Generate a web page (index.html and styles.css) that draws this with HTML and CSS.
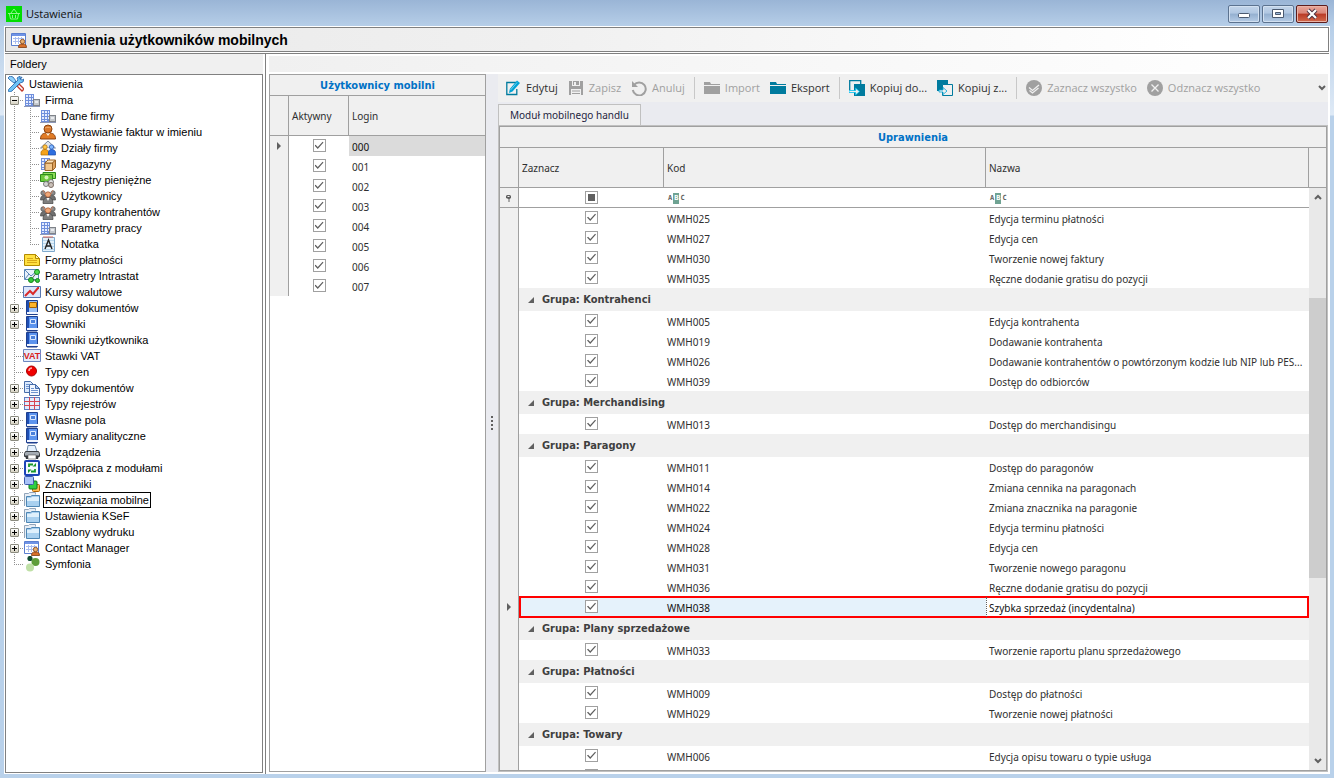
FILE: index.html
```html
<!DOCTYPE html>
<html lang="pl">
<head>
    <meta charset="UTF-8">
    <title>Ustawienia</title>
    <meta name="viewport" content="width=device-width, initial-scale=1">
    <link rel="stylesheet" href="styles.css">
</head>
<body>
<!-- ikony -->
<svg class="sprite" width="0" height="0" aria-hidden="true">
    <symbol id="i-tools" viewBox="0 0 16 16">
        <path d="M2 1l12 12" stroke="#5a9fe0" stroke-width="1"/>
        <path d="M14 1L9 6" stroke="#3b76b8" stroke-width="1.500"/>
        <path d="M9 10l5 5 2-2-5-5z" fill="#fff" stroke="#c0392b" stroke-width="1.300"/>
        <path d="M1 13l9-9-1-2 3-2v3l2 1 2-1-1 3-3 1-8 8-2 1-2-1z" fill="#6fc3f7" stroke="#1f5fa8" stroke-width=".8"/>
        <path d="M0 2l2-2 3 1 3 4-2 2-4-3z" fill="#8fd0fa" stroke="#1f5fa8" stroke-width=".8"/>
    </symbol>
    <symbol id="i-building" viewBox="0 0 16 16">
        <g shape-rendering="crispEdges">
            <path d="M1 2h9v12H1z" fill="#6f8fdc"/>
            <path d="M2 3h2v2H2zM5 3h2v2H5zM8 3h1v2H8zM2 6h2v2H2zM5 6h2v2H5zM8 6h1v2H8zM2 9h2v2H2zM5 9h2v2H5zM8 9h1v2H8zM2 12h2v1H2zM5 12h2v1H5z" fill="#e6edff"/>
            <path d="M9 7h7v7H9z" fill="#7f8389"/>
            <path d="M10 8h5v5h-5z" fill="#c5c9ce"/>
            <path d="M11 9h3v2h-3z" fill="#e9ebee"/>
            <path d="M0 14h16v1H0z" fill="#8d98b8"/>
        </g>
    </symbol>
    <symbol id="i-person" viewBox="0 0 16 16">
        <path d="M0.500 15c0-4 2-5.500 5-6h5c3 .5 5 2 5 6z" fill="#e07b26" stroke="#8c4310"/>
        <path d="M6 9l2 3 2-3z" fill="#fff3e0"/>
        <circle cx="8" cy="5" r="4" fill="#d9772b" stroke="#8c4310"/>
        <path d="M5 4c2-1 4-1 6 0" stroke="#f2b070" fill="none"/>
    </symbol>
    <symbol id="i-dept" viewBox="0 0 16 16">
        <path d="M0.500 8L8 1l7.500 7z" fill="#dfe6ef" stroke="#7b8aa0"/>
        <path d="M2 8h12v6H2z" fill="#eef2f8"/>
        <circle cx="5" cy="7" r="2.200" fill="#ffc74a" stroke="#b06a00" stroke-width=".7"/>
        <path d="M1 15v-3c1-2 2-2.500 4-2.500s3 .5 3.500 2.500v3z" fill="#f5a31b" stroke="#b06a00" stroke-width=".7"/>
        <circle cx="11.500" cy="7" r="2.200" fill="#7fb7ff" stroke="#1c4fae" stroke-width=".7"/>
        <path d="M8.500 15v-3c.5-2 1.500-2.500 3-2.500s3.500.5 4 2.500v3z" fill="#2f6fe0" stroke="#1c4fae" stroke-width=".7"/>
    </symbol>
    <symbol id="i-box" viewBox="0 0 16 16">
        <path d="M1 2h9v12H1z" fill="#6f8fdc"/>
        <path d="M2 3h2v2H2zM5 3h2v2H5zM2 6h2v2H2zM2 9h2v2H2zM2 12h2v1H2zM8 3h1v2H8z" fill="#e6edff"/>
        <path d="M5 7h7.500v7.500H5z" fill="#f2c68c" stroke="#9a6325"/>
        <path d="M5 7l3-3h7.500l-3 3z" fill="#fbe3bd" stroke="#9a6325"/>
        <path d="M12.500 7l3-3v7.500l-3 3z" fill="#dda15d" stroke="#9a6325"/>
    </symbol>
    <symbol id="i-money" viewBox="0 0 16 16">
        <path d="M3 0.500h12.500v6H3z" fill="#8fdc5a" stroke="#2e8b1c"/>
        <path d="M0.500 2.500h12v7H0.500z" fill="#6cc93c" stroke="#2e8b1c"/>
        <circle cx="6.500" cy="5.500" r="2" fill="#d6f5b8"/>
        <circle cx="6" cy="12" r="2.500" fill="#d5d5d5" stroke="#7d7d7d"/>
        <circle cx="11" cy="10" r="2.500" fill="#e2e2e2" stroke="#7d7d7d"/>
        <circle cx="11" cy="13" r="2.500" fill="#c9c0b8" stroke="#7d6d64"/>
    </symbol>
    <symbol id="i-people" viewBox="0 0 16 16">
        <circle cx="3" cy="5" r="2.200" fill="#8c8c8c" stroke="#4f4f4f" stroke-width=".7"/>
        <circle cx="13" cy="5" r="2.200" fill="#8c8c8c" stroke="#4f4f4f" stroke-width=".7"/>
        <path d="M0.500 12c0-3 1-4.500 3-4.500h9c2 0 3 1.500 3 4.500z" fill="#6f6f6f" stroke="#4a4a4a" stroke-width=".7"/>
        <path d="M3 2l2 4M13 2l-2 4" stroke="#c8866a"/>
        <path d="M3 15.500c0-4 1.500-6 5-6s5 2 5 6z" fill="#7e7e7e" stroke="#444" stroke-width=".7"/>
        <circle cx="8" cy="6.500" r="2.700" fill="#f0a878" stroke="#a3522c" stroke-width=".7"/>
        <path d="M6.500 10l1.500 3 1.500-3z" fill="#fff"/>
    </symbol>
    <symbol id="i-note" viewBox="0 0 16 16">
        <path d="M2.500 1.500h12v14h-12z" fill="#e3f1fb" stroke="#7fa9cc"/>
        <path d="M3 4h11v1H3zM3 7h11v1H3zM3 10h11v1H3zM3 13h11v1H3z" fill="#b9d7ee"/>
        <path d="M4 0v2M6 0v2M8 0v2M10 0v2M12 0v2" stroke="#e06a5a"/>
        <path d="M5 13l3.500-9L12 13M6.500 10h4" fill="none" stroke="#222" stroke-width="1.400"/>
    </symbol>
    <symbol id="i-card" viewBox="0 0 16 16">
        <path d="M0.500 2.500h11l4 4v7h-15z" fill="#ffe040" stroke="#b38a00"/>
        <path d="M11.500 2.500v4h4z" fill="#fff3a8" stroke="#b38a00"/>
        <path d="M3 6.500h6M3 8.500h10M3 10.500h10" stroke="#d9a818"/>
    </symbol>
    <symbol id="i-intrastat" viewBox="0 0 16 16">
        <path d="M0.500 1.500h14v10H0.500z" fill="#e9f1fb" stroke="#5a86b8"/>
        <path d="M1 2l6 6 7-6M1 11l4-5" fill="none" stroke="#5a86b8"/>
        <path d="M7 12l6-8M7 11l6 2" stroke="#4d6b4d"/>
        <circle cx="13" cy="4" r="2.500" fill="#4fdc4f" stroke="#15851c"/>
        <circle cx="7" cy="12" r="2.500" fill="#35c93a" stroke="#15851c"/>
        <circle cx="13.500" cy="12.500" r="2" fill="#35c93a" stroke="#15851c"/>
    </symbol>
    <symbol id="i-chart" viewBox="0 0 18 16">
        <path d="M0.500 2.500h17v11H0.500z" fill="#dbe6fb" stroke="#5876b0"/>
        <path d="M2 12l5-5 3 3 5-6 1 0" fill="none" stroke="#d92a2a" stroke-width="2"/>
    </symbol>
    <symbol id="i-book" viewBox="0 0 16 16">
        <path d="M2.500 0.500h11v14h-11z" fill="#5b93ee" stroke="#1e3f8e"/>
        <path d="M3 12h11v2H3z" fill="#f4f7ff"/>
        <path d="M3 1h2v11H3z" fill="#1f4fb4"/>
        <path d="M6.500 3.500h5v4h-5z" fill="#4a80da" stroke="#dce9ff"/>
        <path d="M3 15h10" stroke="#1e3f8e"/>
    </symbol>
    <symbol id="i-book-o" viewBox="0 0 16 16">
        <path d="M2.500 0.500h11v14h-11z" fill="#9cc0f4" stroke="#1e3f8e"/>
        <path d="M3 1h2v11H3z" fill="#1f4fb4"/>
        <path d="M5.500 2.500h7v5h-7z" fill="#ffb52b" stroke="#a86400"/>
        <path d="M3 12h11v2H3z" fill="#f4f7ff"/>
    </symbol>
    <symbol id="i-vat" viewBox="0 0 18 16">
        <path d="M0.500 1.500h17v12H0.500z" fill="#e4ecfb" stroke="#6c87c0"/>
        <text x="9" y="11" text-anchor="middle" font-family="Liberation Sans, sans-serif" font-size="9" font-weight="700" fill="#d81e1e">VAT</text>
    </symbol>
    <symbol id="i-red" viewBox="0 0 16 16">
        <circle cx="7.500" cy="7" r="5" fill="#f00000" stroke="#a00"/>
        <path d="M5 7a3 3 0 0 1 3-3" fill="none" stroke="#ffb0b0" stroke-width="1.500"/>
    </symbol>
    <symbol id="i-docs" viewBox="0 0 16 16">
        <path d="M0.500 1.500h6l3 3v8h-9z" fill="#dceafd" stroke="#476ca8"/>
        <path d="M5.500 4.500h6l4 4v7h-10z" fill="#f2f7ff" stroke="#476ca8"/>
        <path d="M11.500 4.500v4h4z" fill="#a9c6ef" stroke="#476ca8"/>
        <path d="M7 8.500h3M7 10.500h7M7 12.500h7M2 4.500h3M2 6.500h3M2 8.500h3" stroke="#6d93cf"/>
    </symbol>
    <symbol id="i-table" viewBox="0 0 16 16">
        <g shape-rendering="crispEdges">
            <path d="M0 1h16v13H0z" fill="#5f7cc0"/>
            <path d="M1 2h14v11H1z" fill="#e4ebfc"/>
            <path d="M5 1h1v13H5zM10 1h1v13h-1zM0 5h16v1H0zM0 9h16v1H0z" fill="#d64553"/>
        </g>
    </symbol>
    <symbol id="i-printer" viewBox="0 0 16 16">
        <path d="M4 1.500h7l2 6H3z" fill="#e6f2ff" stroke="#6b86a8"/>
        <path d="M1.500 7.500h13l1 2v3H0.500v-3z" fill="#a5acb4" stroke="#3b3f44"/>
        <path d="M1 11.500h14l-1 3.500H2z" fill="#33363b"/>
        <path d="M4 11h8v4H4z" fill="#fff" stroke="#555" stroke-width=".6"/>
    </symbol>
    <symbol id="i-sync" viewBox="0 0 16 16">
        <rect x="1" y="1" width="14" height="14" rx="1" fill="#f3f8ff" stroke="#1c44b8" stroke-width="2"/>
        <path d="M5 7V4.500h4M11 9v2.500H7" fill="none" stroke="#17962a" stroke-width="1.800"/>
        <path d="M8.500 6.500h3.500V3zM7.500 9.500H4V13z" fill="#17962a"/>
    </symbol>
    <symbol id="i-tags" viewBox="0 0 16 16">
        <rect x="8.500" y="8.500" width="7" height="7" rx="1" fill="#ffbb55" stroke="#b06000"/>
        <rect x="5" y="5" width="8" height="8" rx="1" fill="#2fd043" stroke="#0f7a1c"/>
        <rect x=".5" y=".5" width="9" height="8" rx="1" fill="#a9c2f7" stroke="#3c5cab"/>
    </symbol>
    <symbol id="i-folder" viewBox="0 0 16 16">
        <path d="M0.500 14V1.500h4l1-1h6v2" fill="#e8eef5" stroke="#93a5ba"/>
        <path d="M2.500 14.500v-10h4l1.500-1h7.500v11z" fill="#a9d0ef" stroke="#4f87b5"/>
        <path d="M3 9h12V5H8L7 6H3z" fill="#dff0fc"/>
    </symbol>
    <symbol id="i-contact" viewBox="0 0 16 16">
        <path d="M0.500 1.500h14v12H0.500z" fill="#fff" stroke="#5b7fd0"/>
        <path d="M1 2h13v2H1z" fill="#6f93e6"/>
        <path d="M2 6.500h11M2 9.500h11M4.500 5v7M7.500 5v7M10.500 5v7" stroke="#a9bdf0"/>
        <path d="M7.500 15.500c0-2.500 1-3.500 3.500-3.500h1c2.500 0 3.500 1 3.500 3.500z" fill="#d9702a" stroke="#7c3b10" stroke-width=".8"/>
        <circle cx="11.500" cy="9.500" r="2.200" fill="#e8b070" stroke="#7c3b10" stroke-width=".8"/>
    </symbol>
    <symbol id="i-symfonia" viewBox="0 0 16 16">
        <circle cx="6" cy="2.500" r="2.600" fill="#0e4a30"/>
        <circle cx="11.500" cy="6" r="4" fill="#5f9e3a"/>
        <circle cx="6" cy="11.500" r="4" fill="#bfe0a6"/>
    </symbol>
    <symbol id="t-edit" viewBox="0 0 16 16">
        <path d="M11 2.500H1.800v12h10V9" fill="none" stroke="#007b9e" stroke-width="1.300"/>
        <path d="M12 0.500l3 2.500-7.500 8.500L4 13l.8-4z" fill="#00a3d6"/>
        <path d="M12 2.500L5.500 10" stroke="#bfeaf8" stroke-width=".6"/>
    </symbol>
    <symbol id="t-save" viewBox="0 0 16 16">
        <path d="M1 1h14v14H1z" fill="#a0a0a0"/>
        <path d="M4 1h8v5H4zM3 9h10v6H3z" fill="#f0f0f0"/>
        <path d="M5 1h6v4H5z" fill="#a0a0a0"/>
        <path d="M6 2h2v3H6z" fill="#f0f0f0"/>
        <path d="M4 10.500h8v1H4zM4 13h8v1H4z" fill="#a0a0a0"/>
    </symbol>
    <symbol id="t-undo" viewBox="0 0 16 16">
        <path d="M3 5a6.500 6.500 0 1 1-1.200 5" fill="none" stroke="#a0a0a0" stroke-width="2"/>
        <path d="M1 1v6h6z" fill="#a0a0a0"/>
    </symbol>
    <symbol id="t-folder" viewBox="0 0 16 16">
        <path d="M0 2h6l1 2h9v1H0z"/>
        <path d="M0 6h16v8H0z"/>
    </symbol>
    <symbol id="t-copyto" viewBox="0 0 16 16">
        <path d="M.7 10V.7h11V4" fill="none" stroke="#007b9e" stroke-width="1.300"/>
        <path d="M5 4h11v12H5z" fill="#007b9e"/>
        <path d="M0 10.500h6.500V8l4 3.500-4 3.500v-2.500H0z" fill="#f0f0f0" stroke="#00c0f0" stroke-width=".8"/>
    </symbol>
    <symbol id="t-copyfrom" viewBox="0 0 16 16">
        <path d="M0 0h11v11H0z" fill="#007b9e"/>
        <path d="M5.500 4.500h10v11h-10z" fill="#f0f0f0" stroke="#007b9e"/>
        <path d="M2 10h4V7.500l4 3.500-4 3.500V12H2z" fill="#f0f0f0" stroke="#00a3d6" stroke-width=".8"/>
    </symbol>
    <symbol id="t-checkall" viewBox="0 0 16 16">
        <circle cx="8" cy="8" r="8" fill="#a0a0a0"/>
        <path d="M3 7.500l3.500 3L13 5M3.500 10.500l3 2.500 6-5" fill="none" stroke="#f0f0f0" stroke-width="1.300"/>
    </symbol>
    <symbol id="t-uncheck" viewBox="0 0 16 16">
        <circle cx="8" cy="8" r="8" fill="#a0a0a0"/>
        <path d="M4.500 4.500l7 7M11.500 4.500l-7 7" stroke="#f0f0f0" stroke-width="1.300"/>
    </symbol>
    <symbol id="t-filter" viewBox="0 0 8 8">
        <path d="M2 1h3l1 1v2L4.500 5v3h-1V5L1 4V2z" fill="#606060"/>
        <path d="M2.500 2.500h2" stroke="#f0f0f0"/>
    </symbol>
    <symbol id="t-chevron" viewBox="0 0 8 6">
        <path d="M1 1l3 3 3-3" fill="none" stroke="#606060" stroke-width="2"/>
    </symbol>
</svg>

<div class="window">
    <header class="titlebar">
        <svg class="app-icon" viewBox="0 0 16 16"><path d="M0 0h16v16H0z" fill="#00dc00"/><path d="M5 7l3-4 3 4M2 7.500h12M3.500 8l1 5h7l1-5M6.500 9v3M9.500 9v3" fill="none" stroke="#8df58d"/></svg>
        <span class="titlebar-text">Ustawienia</span>
        <div class="window-buttons">
            <button type="button" aria-label="Minimalizuj"><svg viewBox="0 0 16 12"><rect x="2.500" y="5.500" width="11" height="4" rx="1" fill="#fff" stroke="#4b5a70"/></svg></button>
            <button type="button" aria-label="Maksymalizuj"><svg viewBox="0 0 16 12"><path d="M2.500 1.500h11v8h-11z" fill="#fff" stroke="#4b5a70"/><path d="M5.500 4.500h5v2h-5z" fill="#9cb8da" stroke="#4b5a70"/></svg></button>
            <button type="button" class="close" aria-label="Zamknij"><svg viewBox="0 0 16 12"><path d="M4 2l8 8M12 2l-8 8" stroke="#4a3040" stroke-width="4"/><path d="M4 2l8 8M12 2l-8 8" stroke="#fff" stroke-width="2.200"/></svg></button>
        </div>
    </header>

    <div class="content">
        <div class="page-header">
            <svg class="icon"><use href="#i-contact"/></svg>
            <h1>Uprawnienia użytkowników mobilnych</h1>
        </div>

        <div class="panes">
            <nav class="folders">
                <h2>Foldery</h2>
                <div class="tree" id="tree"></div>
            </nav>

            <main class="workspace">
                <div class="workspace-top"></div>
                <div class="workspace-body">
                    <section class="grid users">
                        <h3 class="band">Użytkownicy mobilni</h3>
                        <table>
                            <thead>
                                <tr><th class="ind"></th><th class="col-active">Aktywny</th><th class="col-last">Login</th></tr>
                            </thead>
                            <tbody id="users"></tbody>
                        </table>
                    </section>

                    <div class="splitter"><i></i><i></i><i></i><i></i></div>

                    <section class="permissions">
                        <div class="toolbar">
                            <button type="button"><svg class="icon"><use href="#t-edit"/></svg>Edytuj</button>
                            <button type="button" disabled><svg class="icon"><use href="#t-save"/></svg>Zapisz</button>
                            <button type="button" disabled><svg class="icon"><use href="#t-undo"/></svg>Anuluj</button>
                            <span class="sep"></span>
                            <button type="button" disabled><svg class="icon gray"><use href="#t-folder"/></svg>Import</button>
                            <button type="button"><svg class="icon teal"><use href="#t-folder"/></svg>Eksport</button>
                            <span class="sep"></span>
                            <button type="button"><svg class="icon"><use href="#t-copyto"/></svg>Kopiuj do...</button>
                            <button type="button"><svg class="icon"><use href="#t-copyfrom"/></svg>Kopiuj z...</button>
                            <span class="sep"></span>
                            <button type="button" disabled><svg class="icon"><use href="#t-checkall"/></svg>Zaznacz wszystko</button>
                            <button type="button" disabled><svg class="icon"><use href="#t-uncheck"/></svg>Odznacz wszystko</button>
                            <button type="button" class="more" aria-label="Więcej"><svg class="chevron"><use href="#t-chevron"/></svg></button>
                        </div>
                        <div class="tabs"><button type="button" class="tab">Moduł mobilnego handlu</button></div>
                        <div class="tab-page">
                            <div class="grid">
                                <h3 class="band">Uprawnienia</h3>
                                <div class="grid-body">
                                    <div class="grid-rows">
                                        <table>
                                            <thead>
                                                <tr><th class="ind"></th><th class="col-check">Zaznacz</th><th class="col-code">Kod</th><th>Nazwa</th></tr>
                                            </thead>
                                            <tbody id="permissions"></tbody>
                                        </table>
                                    </div>
                                    <div class="grid-side">
                                        <div class="side-head"></div>
                                        <div class="scrollbar">
                                            <svg class="chevron up"><use href="#t-chevron"/></svg>
                                            <div class="before"></div>
                                            <div class="thumb"></div>
                                            <div class="after"></div>
                                            <svg class="chevron"><use href="#t-chevron"/></svg>
                                        </div>
                                    </div>
                                </div>
                            </div>
                        </div>
                    </section>
                </div>
            </main>
        </div>
    </div>
</div>

<script>
// drzewo: [ikona, nazwa, rozwijane, dzieci]
const tree = [
    ['building', 'Firma', '-', [
        ['building', 'Dane firmy'],
        ['person', 'Wystawianie faktur w imieniu'],
        ['dept', 'Działy firmy'],
        ['box', 'Magazyny'],
        ['money', 'Rejestry pieniężne'],
        ['people', 'Użytkownicy'],
        ['people', 'Grupy kontrahentów'],
        ['building', 'Parametry pracy'],
        ['note', 'Notatka']
    ]],
    ['card', 'Formy płatności'],
    ['intrastat', 'Parametry Intrastat'],
    ['chart', 'Kursy walutowe'],
    ['book-o', 'Opisy dokumentów', '+'],
    ['book', 'Słowniki', '+'],
    ['book', 'Słowniki użytkownika'],
    ['vat', 'Stawki VAT'],
    ['red', 'Typy cen'],
    ['docs', 'Typy dokumentów', '+'],
    ['table', 'Typy rejestrów', '+'],
    ['book', 'Własne pola', '+'],
    ['book', 'Wymiary analityczne', '+'],
    ['printer', 'Urządzenia', '+'],
    ['sync', 'Współpraca z modułami', '+'],
    ['tags', 'Znaczniki', '+'],
    ['folder', 'Rozwiązania mobilne', '+'],
    ['folder', 'Ustawienia KSeF', '+'],
    ['folder', 'Szablony wydruku', '+'],
    ['contact', 'Contact Manager', '+'],
    ['symfonia', 'Symfonia']
];
const selected = 'Rozwiązania mobilne';

const permissions = [
    [null, [
        ['WMH025', 'Edycja terminu płatności'],
        ['WMH027', 'Edycja cen'],
        ['WMH030', 'Tworzenie nowej faktury'],
        ['WMH035', 'Ręczne dodanie gratisu do pozycji']
    ]],
    ['Kontrahenci', [
        ['WMH005', 'Edycja kontrahenta'],
        ['WMH019', 'Dodawanie kontrahenta'],
        ['WMH026', 'Dodawanie kontrahentów o powtórzonym kodzie lub NIP lub PES...'],
        ['WMH039', 'Dostęp do odbiorców']
    ]],
    ['Merchandising', [
        ['WMH013', 'Dostęp do merchandisingu']
    ]],
    ['Paragony', [
        ['WMH011', 'Dostęp do paragonów'],
        ['WMH014', 'Zmiana cennika na paragonach'],
        ['WMH022', 'Zmiana znacznika na paragonie'],
        ['WMH024', 'Edycja terminu płatności'],
        ['WMH028', 'Edycja cen'],
        ['WMH031', 'Tworzenie nowego paragonu'],
        ['WMH036', 'Ręczne dodanie gratisu do pozycji'],
        ['WMH038', 'Szybka sprzedaż (incydentalna)']
    ]],
    ['Plany sprzedażowe', [
        ['WMH033', 'Tworzenie raportu planu sprzedażowego']
    ]],
    ['Płatności', [
        ['WMH009', 'Dostęp do płatności'],
        ['WMH029', 'Tworzenie nowej płatności']
    ]],
    ['Towary', [
        ['WMH006', 'Edycja opisu towaru o typie usługa'],
        ['', '']
    ]]
];

function node(icon, name, toggle) {
    const btn = toggle ? `<button type="button" class="toggle${toggle === '+' ? ' plus' : ''}" aria-label="${name}"></button>` : '';
    const wide = icon === 'chart' || icon === 'vat' ? ' wide' : '';
    return `<div class="node"><span class="slot">${btn}</span><svg class="icon${wide}"><use href="#i-${icon}"/></svg>` +
        `<a href="#" class="label${name === selected ? ' selected' : ''}">${name}</a></div>`;
}

function list(items) {
    return '<ul>' + items.map(([icon, name, toggle, children]) =>
        `<li>${node(icon, name, toggle)}${children ? list(children) : ''}</li>`).join('') + '</ul>';
}

document.getElementById('tree').innerHTML =
    '<div class="node root"><svg class="icon"><use href="#i-tools"/></svg><a href="#" class="label">Ustawienia</a></div>' + list(tree);

document.getElementById('users').innerHTML = ['000', '001', '002', '003', '004', '005', '006', '007'].map((login, i) =>
    `<tr${i === 0 ? ' class="current"' : ''}><td class="ind">${i === 0 ? '<i class="arrow"></i>' : ''}</td>` +
    `<td class="check"><input type="checkbox" checked aria-label="Aktywny ${login}"></td><td>${login}</td></tr>`).join('');

const abc = '<span class="abc">A<b>B</b>C</span>';
let rows = '<tr class="filter"><td class="ind"><svg class="pin"><use href="#t-filter"/></svg></td>' +
    `<td class="check"><input type="checkbox" class="mixed" aria-label="Zaznacz"></td><td>${abc}</td><td>${abc}</td></tr>`;
permissions.forEach(([group, items]) => {
    if (group) {
        rows += `<tr class="group"><td class="ind"></td><td colspan="3"><i class="open"></i>Grupa: ${group}</td></tr>`;
    }
    items.forEach(([code, name]) => {
        const focused = code === 'WMH038';
        rows += `<tr${focused ? ' class="focused"' : ''}><td class="ind">${focused ? '<i class="arrow"></i>' : ''}</td>` +
            `<td class="check"><input type="checkbox" checked aria-label="${code}"></td><td>${code}</td><td>${name}</td></tr>`;
    });
});
document.getElementById('permissions').innerHTML = rows;
</script>
</body>
</html>
```
FILE: styles.css
```css
* {
    box-sizing: border-box;
}

body {
    margin: 0;
    height: 100vh;
    overflow: hidden;
    font-family: "Noto Sans", "DejaVu Sans Condensed", sans-serif;
    font-size: 10px;
    color: #2f2f2f;
}

h1, h2, h3, ul {
    margin: 0;
    padding: 0;
}

button {
    font: inherit;
    color: inherit;
    background: none;
    border: none;
    padding: 0;
}

.sprite {
    position: absolute;
}

.icon {
    width: 16px;
    height: 16px;
    flex: none;
}

/* okno */
.window {
    height: 100%;
    display: flex;
    flex-direction: column;
    padding: 0 4px 4px;
    background: linear-gradient(#9ab5d6 0, #b6cee8 26px, #dfeaf6 115px, #b9d1ea 116px);
}

.titlebar {
    height: 26px;
    flex: none;
    display: flex;
    align-items: center;
    gap: 4px;
    padding: 2px 2px 0;
}

.app-icon {
    width: 16px;
    height: 16px;
}

.titlebar-text {
    flex: 1;
    font: 11px/16px "Open Sans", sans-serif;
    color: #111;
}

.window-buttons {
    display: flex;
    gap: 2px;
}

.window-buttons button {
    width: 32px;
    height: 18px;
    border: 1px solid #5c7390;
    border-radius: 2px;
    background: linear-gradient(#c3d5ea 0, #b0c7e2 45%, #94b0d0 50%, #b5cce6 100%);
    box-shadow: inset 0 0 0 1px #d3e1f1;
    display: flex;
    align-items: center;
    justify-content: center;
}

.window-buttons svg {
    width: 16px;
    height: 12px;
}

.window-buttons .close {
    border-color: #5d1c1c;
    background: linear-gradient(#e9a79b 0, #d98578 45%, #b93a26 50%, #d26a4c 100%);
    box-shadow: inset 0 0 0 1px #eab3a6;
}

.content {
    flex: 1;
    min-height: 0;
    display: flex;
    flex-direction: column;
    background: #fff;
    padding: 1px 1px 0;
}

.page-header {
    height: 25px;
    flex: none;
    display: flex;
    align-items: center;
    gap: 5px;
    padding: 0 5px;
    border: 1px solid #808080;
    background: linear-gradient(to right, #e9e9e9 0, #f0f0f0 40%, #fff 90%);
}

.page-header h1 {
    font: bold 14px/20px "Liberation Sans", Arial, sans-serif;
    color: #000;
}

.panes {
    flex: 1;
    min-height: 0;
    display: flex;
    margin-top: 1px;
    border-top: 1px solid #808080;
}

/* lewy panel */
.folders {
    width: 261px;
    flex: none;
    display: flex;
    flex-direction: column;
    padding: 0 2px 1px 0;
    border-right: 1px solid #808080;
    font-family: "Liberation Sans", Arial, sans-serif;
    font-size: 11px;
    color: #000;
}

.folders h2 {
    height: 20px;
    font-size: 11px;
    font-weight: normal;
    line-height: 20px;
    padding-left: 5px;
    background: #f0f0f0;
}

.tree {
    flex: 1;
    min-height: 0;
    overflow: hidden;
    border: 1px solid #808080;
    padding: 1px 2px;
}

.tree ul {
    list-style: none;
}

.tree li {
    background: repeating-linear-gradient(#909090 0 1px, transparent 1px 2px) 6px 0 / 1px 100% no-repeat;
}

.tree li:last-child {
    background-size: 1px 9px;
}

.tree li ul {
    padding-left: 16px;
}

.node {
    height: 16px;
    display: flex;
    align-items: center;
}

.slot {
    width: 16px;
    height: 16px;
    flex: none;
    display: flex;
    align-items: center;
    padding-left: 2px;
    background: repeating-linear-gradient(to right, #909090 0 1px, transparent 1px 2px) 6px 8px / 10px 1px no-repeat;
}

.toggle {
    width: 9px;
    height: 9px;
    border: 1px solid #8c8c80;
    border-radius: 1px;
    background:
        linear-gradient(#000, #000) center / 5px 1px no-repeat,
        linear-gradient(#fff, #d6d2c2);
}

.toggle.plus {
    background:
        linear-gradient(#000, #000) center / 5px 1px no-repeat,
        linear-gradient(#000, #000) center / 1px 5px no-repeat,
        linear-gradient(#fff, #d6d2c2);
}

.tree .wide {
    width: 18px;
    margin: 0 -1px;
}

.label {
    margin-left: 3px;
    padding: 0 1px;
    border: 1px solid transparent;
    line-height: 14px;
    color: #000;
    text-decoration: none;
    white-space: nowrap;
}

.label.selected {
    border-color: #000;
}

/* prawa strona */
.workspace {
    flex: 1;
    min-width: 0;
    display: flex;
    flex-direction: column;
    padding: 2px 1px 2px 3px;
}

.workspace-top {
    height: 16px;
    flex: none;
    margin-bottom: 2px;
    background: linear-gradient(to right, #f0f0f0, #fff);
}

.workspace-body {
    flex: 1;
    min-height: 0;
    display: flex;
    background: #eaebf0;
}

.grid {
    display: flex;
    flex-direction: column;
    border: 1px solid #a0a0a0;
    background: #fff;
    overflow: hidden;
}

.users {
    width: 217px;
    flex: none;
}

.band {
    height: 21px;
    flex: none;
    border-bottom: 1px solid #a0a0a0;
    background: #f0f0f0;
    font: bold 11px/21px "DejaVu Sans Condensed", "DejaVu Sans", sans-serif;
    text-align: center;
    color: #0072c6;
}

table {
    width: 100%;
    table-layout: fixed;
    border-collapse: separate;
    border-spacing: 0;
}

th {
    height: 40px;
    padding: 0 3px;
    border-right: 1px solid #a0a0a0;
    border-bottom: 1px solid #a0a0a0;
    background: #f0f0f0;
    font-weight: normal;
    text-align: left;
}

th.col-last {
    border-right: none;
}

td {
    height: 20px;
    padding: 1px 3px 0;
    line-height: 18px;
    white-space: nowrap;
    overflow: hidden;
}

.ind {
    width: 19px;
    padding: 0;
    border-right: 1px solid #a0a0a0;
    background: #f0f0f0;
    text-align: center;
}

.col-active {
    width: 60px;
}

.col-check {
    width: 145px;
}

.col-code {
    width: 322px;
}

.arrow {
    display: inline-block;
    border: 4px solid transparent;
    border-left-color: #606060;
    border-right: none;
}

.current td:last-child {
    background: #dbdbdb;
    color: #111;
}

td.check {
    padding: 0 0 1px;
    line-height: 0;
    text-align: center;
}

input[type="checkbox"] {
    appearance: none;
    display: inline-block;
    vertical-align: top;
    width: 13px;
    height: 13px;
    margin: 0;
    padding: 1px;
    border: 1px solid #a0a0a0;
    background: #fff;
}

input[type="checkbox"]::before {
    content: "";
    display: block;
    width: 9px;
    height: 9px;
}

input[type="checkbox"]:checked::before {
    background: #606060;
    clip-path: polygon(0 50%, 12% 42%, 36% 66%, 90% 8%, 100% 18%, 36% 90%);
}

input.mixed::before {
    width: 7px;
    height: 7px;
    margin: 1px;
    background: #606060;
}

.splitter {
    width: 12px;
    flex: none;
    display: flex;
    flex-direction: column;
    align-items: center;
    justify-content: center;
    gap: 2px;
}

.splitter i {
    width: 2px;
    height: 2px;
    background: #606060;
}

.permissions {
    flex: 1;
    min-width: 0;
    display: flex;
    flex-direction: column;
}

/* pasek narzędzi */
.toolbar {
    height: 28px;
    flex: none;
    display: flex;
    align-items: center;
    padding-left: 2px;
    background: #f0f0f0;
    font: 11px/16px "Open Sans", sans-serif;
}

.toolbar button {
    display: flex;
    align-items: center;
    gap: 5px;
    padding: 0 5px;
    white-space: nowrap;
}

.toolbar button:disabled {
    color: #a0a0a0;
}

.toolbar .sep {
    width: 1px;
    height: 22px;
    margin: 0 4px;
    background: #c8c8c8;
}

.gray {
    fill: #a0a0a0;
}

.teal {
    fill: #007b9e;
}

.toolbar .more {
    margin-left: auto;
    padding: 0 2px;
}

.chevron {
    width: 8px;
    height: 6px;
    flex: none;
}

.chevron.up {
    transform: rotate(180deg);
}

.tabs {
    height: 23px;
    flex: none;
    padding-top: 2px;
}

.tab {
    height: 21px;
    padding: 0 11px;
    border: 1px solid #c0c0c0;
    border-bottom: none;
    background: #f0f0f0;
    color: #1f1f3f;
}

.tab-page {
    flex: 1;
    min-height: 0;
    display: flex;
    border: 1px solid #c0c0c0;
}

.tab-page .grid {
    flex: 1;
    min-width: 0;
}

.grid-body {
    flex: 1;
    min-height: 0;
    display: flex;
}

.grid-rows {
    flex: 1;
    min-width: 0;
    overflow: hidden;
}

.filter td {
    border-bottom: 1px solid #a0a0a0;
}

.pin {
    width: 8px;
    height: 8px;
}

.abc {
    display: flex;
    align-items: center;
    gap: 1px;
    padding-left: 1px;
    font: bold 7px/11px "DejaVu Sans Mono", monospace;
    color: #606060;
}

.abc b {
    padding: 0 1px;
    background: #6fa393;
    color: #fff;
}

.group td {
    height: 23px;
    background: #f0f0f0;
    font: bold 11px/20px "DejaVu Sans Condensed", "DejaVu Sans", sans-serif;
    color: #3f3f3f;
    padding-left: 9px;
}

.group .ind {
    padding: 0;
}

.open {
    display: inline-block;
    margin-right: 8px;
    border-left: 6px solid transparent;
    border-bottom: 6px solid #606060;
}

/* bieżący wiersz */
.focused td:not(.ind) {
    position: relative;
    overflow: visible;
    background: #e5f2fb;
    box-shadow: 0 -1px #f00, 0 1px #f00, inset 0 1px #f00, inset 0 -1px #f00;
    color: #111;
}

.focused td.check {
    box-shadow: 0 -1px #f00, 0 1px #f00, inset 0 1px #f00, inset 0 -1px #f00, inset 2px 0 #f00;
}

.focused td:last-child {
    background: #fff;
    border-left: 1px dotted #606060;
    padding-left: 2px;
    box-shadow: 0 -1px #f00, 0 1px #f00, inset 0 1px #f00, inset 0 -1px #f00, inset -2px 0 #f00;
}

.grid-side {
    width: 17px;
    flex: none;
    display: flex;
    flex-direction: column;
}

.side-head {
    height: 40px;
    flex: none;
    border-bottom: 1px solid #a0a0a0;
    background: #f0f0f0;
}

.scrollbar {
    flex: 1;
    min-height: 0;
    display: flex;
    flex-direction: column;
    align-items: center;
    padding: 6px 0;
    background: #e9e9e9;
}

.scrollbar .before {
    flex: 98;
}

.scrollbar .thumb {
    flex: 279;
    width: 100%;
    background: #cdcdcd;
}

.scrollbar .after {
    flex: 180;
}
```
